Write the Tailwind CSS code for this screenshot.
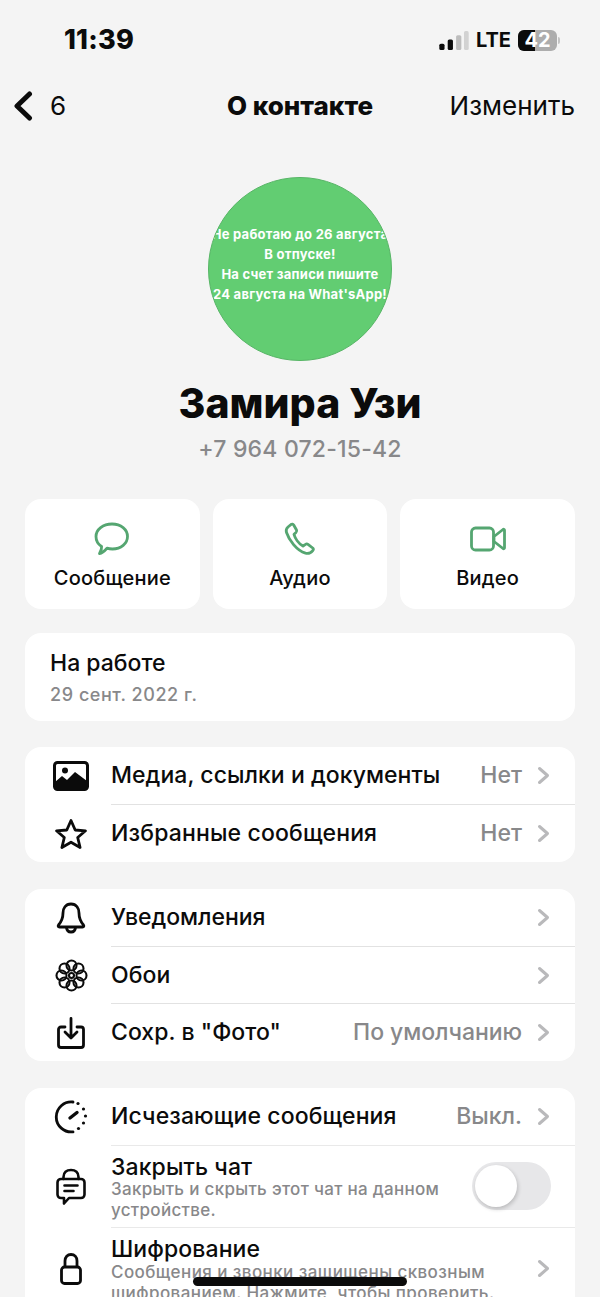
<!DOCTYPE html>
<html lang="ru">
<head>
  <meta charset="UTF-8" />
  <title>О контакте</title>
  <script src="https://cdn.jsdelivr.net/npm/@tailwindcss/browser@4"></script>
</head>
<body class="bg-[#f4f4f4] font-['Inter',sans-serif] text-[#0b0b0b]">
<div class="relative w-[600px] h-[1297px] overflow-hidden">

  <!-- status bar -->
  <div class="h-[80px] flex items-center justify-between pl-[64px] pr-[40px]">
    <span class="text-[27px] font-extrabold tracking-[0.2px]">11:39</span>
    <div class="flex items-center gap-[7px]">
      <svg width="30" height="21" viewBox="0 0 28 20">
        <rect x="0" y="13" width="5" height="6" rx="1.5" fill="#0b0b0b"/>
        <rect x="8" y="9" width="5" height="10" rx="1.5" fill="#0b0b0b"/>
        <rect x="16" y="5" width="5" height="14" rx="1.5" fill="#bdbdbd"/>
        <rect x="23.500" y="1" width="4.500" height="18" rx="1.500" fill="#d2d2d2"/>
      </svg>
      <span class="text-[20px] font-bold leading-none">LTE</span>
      <div class="flex items-center">
        <div class="relative w-[39px] h-[21px] rounded-[6px] overflow-hidden bg-[#adadad] flex">
          <div class="w-[17px] bg-[#0b0b0b]"></div>
          <span class="absolute inset-0 flex items-center justify-center text-white text-[20px] font-bold leading-none">42</span>
        </div>
        <div class="w-[2px] h-[7px] ml-[1px] rounded-r bg-[#c4c4c4]"></div>
      </div>
    </div>
  </div>

  <!-- nav -->
  <div class="relative h-[52px] flex items-center justify-between pl-[14px] pr-[25px]">
    <div class="flex items-center gap-[17px]">
      <svg width="19" height="30" viewBox="0 0 19 30" fill="none" stroke="#0b0b0b" stroke-width="5" stroke-linecap="round" stroke-linejoin="round"><path d="M15.500 3 L3 15 L15.500 27"/></svg>
      <span class="text-[26px] leading-none">6</span>
    </div>
    <span class="absolute inset-x-0 text-center text-[26px] font-extrabold leading-none pointer-events-none">О контакте</span>
    <span class="text-[26px] leading-none">Изменить</span>
  </div>

  <!-- avatar -->
  <div class="mt-[45px] flex justify-center">
    <div class="w-[184px] h-[184px] rounded-full bg-[#62cd72] border border-[#57b566] overflow-hidden flex flex-col items-center justify-center pb-[10px] text-white text-[13px] font-bold leading-[20px] whitespace-nowrap tracking-[0.25px]">
      <span>Не работаю до 26 августа</span>
      <span>В отпуске!</span>
      <span>На счет записи пишите</span>
      <span>24 августа на What'sApp!</span>
    </div>
  </div>

  <div class="mt-[18px] text-center text-[41px] font-extrabold leading-[48px]">Замира Узи</div>
  <div class="mt-[8px] text-center text-[23px] font-medium leading-[28px] text-[#88888a] tracking-[0.2px]">+7 964 072-15-42</div>

  <main class="mt-[36px] px-[25px]">

    <!-- actions -->
    <div class="grid grid-cols-3 gap-[13px]">
      <div class="h-[110px] bg-white rounded-[16px] flex flex-col items-center pt-[23px]">
        <svg width="36" height="34" viewBox="0 0 36 34" fill="none" stroke="#55a671" stroke-width="2.800" stroke-linejoin="round" stroke-linecap="round"><path d="M18 2 C27 2 33.500 7.500 33.500 14.500 C33.500 21.500 27 27 18.500 27 C16.500 27 14.500 26.700 13 26.200 C10.500 29 7.500 31.200 5.500 31.500 C6.800 29.500 7.800 27 7.600 24.500 C4 22.200 2 18.500 2 14.500 C2 7.500 9 2 18 2 Z"/></svg>
        <span class="mt-[10px] text-[20px] font-medium leading-[24px] tracking-[0.2px]">Сообщение</span>
      </div>
      <div class="h-[110px] bg-white rounded-[16px] flex flex-col items-center pt-[23px]">
        <svg width="36" height="34" viewBox="0 0 36 34" fill="none" stroke="#55a671" stroke-width="2.800" stroke-linejoin="round" stroke-linecap="round"><path d="M6 5 L9 2.500 C10 1.800 11 2 11.700 3 L14.500 8 C15 9 14.800 9.800 14 10.500 L12 12.300 C13 16 16.500 21.500 21 24 L23.500 22.300 C24.300 21.700 25.300 21.800 26 22.400 L30.700 26 C31.500 26.800 31.500 27.800 30.800 28.600 C29 30.800 26.500 32 23.500 31.200 C14.500 28.500 7 18 4.500 10.500 C3.800 8.300 4.500 6.300 6 5 Z"/></svg>
        <span class="mt-[10px] text-[20px] font-medium leading-[24px] tracking-[0.2px]">Аудио</span>
      </div>
      <div class="h-[110px] bg-white rounded-[16px] flex flex-col items-center pt-[23px]">
        <svg width="36" height="34" viewBox="0 0 36 34" fill="none" stroke="#55a671" stroke-width="2.800" stroke-linejoin="round" stroke-linecap="round"><rect x="1.500" y="6" width="22" height="22" rx="4"/><path d="M24 14.500 L33 7.500 C33.800 7 34.500 7.400 34.500 8.300 L34.500 25.700 C34.500 26.600 33.800 27 33 26.500 L24 19.500 Z"/></svg>
        <span class="mt-[10px] text-[20px] font-medium leading-[24px] tracking-[0.2px]">Видео</span>
      </div>
    </div>

    <!-- status -->
    <div class="mt-[24px] h-[88px] bg-white rounded-[16px] pl-[25px] pt-[16px]">
      <div class="text-[23px] font-medium leading-[28px]">На работе</div>
      <div class="mt-[6px] text-[18px] font-medium leading-[24px] text-[#88888a] tracking-[0.55px]">29 сент. 2022 г.</div>
    </div>

    <!-- media group -->
    <div class="mt-[26px] bg-white rounded-[16px] overflow-hidden">
      <div class="h-[57px] flex items-center">
        <div class="w-[86px] flex justify-center pl-[6px] shrink-0">
          <svg width="36" height="30" viewBox="0 0 36 30"><rect x="1.500" y="1.500" width="33" height="27" rx="3" fill="none" stroke="#0b0b0b" stroke-width="3"/><circle cx="12" cy="9.500" r="3" fill="#0b0b0b"/><path d="M2 28 L2 21 L9 15 L14 19 L22 11 L34 20 L34 28 Z" fill="#0b0b0b"/></svg>
        </div>
        <span class="text-[23px] font-medium tracking-[0.05px] whitespace-nowrap">Медиа, ссылки и документы</span>
        <span class="ml-auto text-[23px] text-[#88888a] font-medium">Нет</span>
        <svg class="ml-[15px] mr-[25px]" width="13" height="19" viewBox="0 0 13 19" fill="none" stroke="#b9b9bb" stroke-width="3" stroke-linecap="round" stroke-linejoin="round"><path d="M2.500 2.500 L10.500 9.500 L2.500 16.500"/></svg>
      </div>
      <div class="ml-[86px] h-px bg-[#e2e2e2]"></div>
      <div class="h-[57px] flex items-center">
        <div class="w-[86px] flex justify-center pl-[6px] shrink-0">
          <svg width="34" height="32" viewBox="0 0 34 32" fill="none" stroke="#0b0b0b" stroke-width="2.800" stroke-linejoin="round"><path d="M17 2.500 L21.200 12 L31.500 12.800 L23.700 19.500 L26.100 29.500 L17 24.200 L7.900 29.500 L10.300 19.500 L2.500 12.800 L12.800 12 Z"/></svg>
        </div>
        <span class="text-[23px] font-medium tracking-[0.15px] whitespace-nowrap">Избранные сообщения</span>
        <span class="ml-auto text-[23px] text-[#88888a] font-medium">Нет</span>
        <svg class="ml-[15px] mr-[25px]" width="13" height="19" viewBox="0 0 13 19" fill="none" stroke="#b9b9bb" stroke-width="3" stroke-linecap="round" stroke-linejoin="round"><path d="M2.500 2.500 L10.500 9.500 L2.500 16.500"/></svg>
      </div>
    </div>

    <!-- settings group -->
    <div class="mt-[27px] bg-white rounded-[16px] overflow-hidden">
      <div class="h-[57px] flex items-center">
        <div class="w-[86px] flex justify-center pl-[6px] shrink-0">
          <svg width="30" height="32" viewBox="0 0 30 32" fill="none" stroke="#0b0b0b" stroke-width="2.800" stroke-linejoin="round" stroke-linecap="round"><path d="M15 2 C9.500 2 7 6.500 7 11 C7 17 5.500 19.500 2.500 23 C1.800 24 2.200 25 3.500 25 L26.500 25 C27.800 25 28.200 24 27.500 23 C24.500 19.500 23 17 23 11 C23 6.500 20.500 2 15 2 Z"/><path d="M10.500 25.500 C10.800 28.500 12.500 30 15 30 C17.500 30 19.200 28.500 19.500 25.500"/></svg>
        </div>
        <span class="text-[23px] font-medium tracking-[-0.05px]">Уведомления</span>
        <svg class="ml-auto mr-[25px]" width="13" height="19" viewBox="0 0 13 19" fill="none" stroke="#b9b9bb" stroke-width="3" stroke-linecap="round" stroke-linejoin="round"><path d="M2.500 2.500 L10.500 9.500 L2.500 16.500"/></svg>
      </div>
      <div class="ml-[86px] h-px bg-[#e2e2e2]"></div>
      <div class="h-[56px] flex items-center">
        <div class="w-[86px] flex justify-center pl-[6px] shrink-0">
          <svg width="33" height="33" viewBox="0 0 33 33" fill="none" stroke="#0b0b0b" stroke-width="2.100">
            <circle cx="16.500" cy="6.500" r="5"/><circle cx="16.500" cy="26.500" r="5"/><circle cx="6.500" cy="16.500" r="5"/><circle cx="26.500" cy="16.500" r="5"/>
            <circle cx="9.500" cy="9.500" r="5"/><circle cx="23.500" cy="9.500" r="5"/><circle cx="9.500" cy="23.500" r="5"/><circle cx="23.500" cy="23.500" r="5"/>
            <circle cx="16.500" cy="16.500" r="2.500"/>
          </svg>
        </div>
        <span class="text-[23px] font-medium tracking-[0.1px]">Обои</span>
        <svg class="ml-auto mr-[25px]" width="13" height="19" viewBox="0 0 13 19" fill="none" stroke="#b9b9bb" stroke-width="3" stroke-linecap="round" stroke-linejoin="round"><path d="M2.500 2.500 L10.500 9.500 L2.500 16.500"/></svg>
      </div>
      <div class="ml-[86px] h-px bg-[#e2e2e2]"></div>
      <div class="h-[57px] flex items-center">
        <div class="w-[86px] flex justify-center pl-[6px] shrink-0">
          <svg width="28" height="32" viewBox="0 0 28 32" fill="none" stroke="#0b0b0b" stroke-width="2.800" stroke-linejoin="round" stroke-linecap="round"><path d="M8 10 L4 10 C2.500 10 1.500 11 1.500 12.500 L1.500 28 C1.500 29.500 2.500 30.500 4 30.500 L24 30.500 C25.500 30.500 26.500 29.500 26.500 28 L26.500 12.500 C26.500 11 25.500 10 24 10 L20 10"/><path d="M14 1.500 L14 20.500 M8 15 L14 21 L20 15"/></svg>
        </div>
        <span class="text-[23px] font-medium tracking-[0.05px]">Сохр. в "Фото"</span>
        <span class="ml-auto text-[23px] text-[#88888a] font-medium tracking-[-0.05px]">По умолчанию</span>
        <svg class="ml-[15px] mr-[25px]" width="13" height="19" viewBox="0 0 13 19" fill="none" stroke="#b9b9bb" stroke-width="3" stroke-linecap="round" stroke-linejoin="round"><path d="M2.500 2.500 L10.500 9.500 L2.500 16.500"/></svg>
      </div>
    </div>

    <!-- privacy group -->
    <div class="mt-[27px] bg-white rounded-t-[16px]">
      <div class="h-[57px] flex items-center">
        <div class="w-[86px] flex justify-center pl-[6px] shrink-0">
          <svg width="34" height="34" viewBox="0 0 34 34" fill="none" stroke="#0b0b0b" stroke-width="2.800" stroke-linecap="round">
            <path d="M19 2 A15 15 0 1 0 19 31.800"/>
            <path d="M16 18 L23 12.500" stroke-width="3.400"/>
            <circle cx="24" cy="3.500" r="1.600" fill="#0b0b0b" stroke="none"/>
            <circle cx="29.500" cy="9" r="1.600" fill="#0b0b0b" stroke="none"/>
            <circle cx="31.500" cy="16" r="1.600" fill="#0b0b0b" stroke="none"/>
            <circle cx="29.500" cy="23" r="1.600" fill="#0b0b0b" stroke="none"/>
            <circle cx="24.500" cy="28.500" r="1.600" fill="#0b0b0b" stroke="none"/>
          </svg>
        </div>
        <span class="text-[23px] font-medium tracking-[0.1px] whitespace-nowrap">Исчезающие сообщения</span>
        <span class="ml-auto text-[23px] text-[#88888a] font-medium">Выкл.</span>
        <svg class="ml-[15px] mr-[25px]" width="13" height="19" viewBox="0 0 13 19" fill="none" stroke="#b9b9bb" stroke-width="3" stroke-linecap="round" stroke-linejoin="round"><path d="M2.500 2.500 L10.500 9.500 L2.500 16.500"/></svg>
      </div>
      <div class="ml-[86px] h-px bg-[#e9e9e9]"></div>
      <div class="h-[81px] flex items-center">
        <div class="w-[86px] flex justify-center pl-[6px] shrink-0">
          <svg width="30" height="38" viewBox="0 0 30 38" fill="none" stroke="#0b0b0b" stroke-width="2.600" stroke-linejoin="round" stroke-linecap="round">
            <path d="M7.500 11 L7.500 9 C7.500 4.500 10.500 2 15 2 C19.500 2 22.500 4.500 22.500 9 L22.500 11"/>
            <path d="M5 11 L25 11 C27 11 28.500 12.500 28.500 14.500 L28.500 26.500 C28.500 28.500 27 30 25 30 L13 30 L8 35.500 L8 30 L5 30 C3 30 1.500 28.500 1.500 26.500 L1.500 14.500 C1.500 12.500 3 11 5 11 Z"/>
            <path d="M8.500 17.500 L21.500 17.500 M8.500 23 L17.500 23"/>
          </svg>
        </div>
        <div class="w-[340px] pt-[2px]">
          <div class="text-[23px] font-medium leading-[26px] tracking-[0.1px]">Закрыть чат</div>
          <div class="text-[17px] font-medium leading-[21px] text-[#88888a] tracking-[0.3px] mt-[-1px]">Закрыть и скрыть этот чат на данном устройстве.</div>
        </div>
        <div class="ml-auto mr-[24px] mb-[2px] w-[79px] h-[48px] rounded-full bg-[#e7e7e9] p-[3px] shrink-0">
          <div class="w-[42px] h-[42px] rounded-full bg-white shadow-[1px_2px_4px_rgba(0,0,0,0.2)]"></div>
        </div>
      </div>
      <div class="ml-[86px] h-px bg-[#e9e9e9]"></div>
      <div class="h-[81px] flex items-center">
        <div class="w-[86px] flex justify-center pl-[6px] shrink-0">
          <svg width="22" height="32" viewBox="0 0 22 32" fill="none" stroke="#0b0b0b" stroke-width="2.800" stroke-linejoin="round"><path d="M5 14 L5 8 C5 4 7.500 1.500 11 1.500 C14.500 1.500 17 4 17 8 L17 14"/><rect x="1.500" y="14" width="19" height="16.500" rx="3"/></svg>
        </div>
        <div class="w-[410px] shrink-0 pt-[2px]">
          <div class="text-[23px] font-medium leading-[26px] tracking-[0.1px]">Шифрование</div>
          <div class="text-[17px] font-medium leading-[21px] text-[#88888a] tracking-[0.42px]">Сообщения и звонки защищены сквозным шифрованием. Нажмите, чтобы проверить.</div>
        </div>
        <svg class="ml-auto mr-[25px]" width="13" height="19" viewBox="0 0 13 19" fill="none" stroke="#b9b9bb" stroke-width="3" stroke-linecap="round" stroke-linejoin="round"><path d="M2.500 2.500 L10.500 9.500 L2.500 16.500"/></svg>
      </div>
    </div>
  </main>

  <!-- home indicator -->
  <div class="absolute left-[193px] top-[1277px] w-[214px] h-[9px] rounded-full bg-[#0b0b0b]"></div>
</div>
</body>
</html>
